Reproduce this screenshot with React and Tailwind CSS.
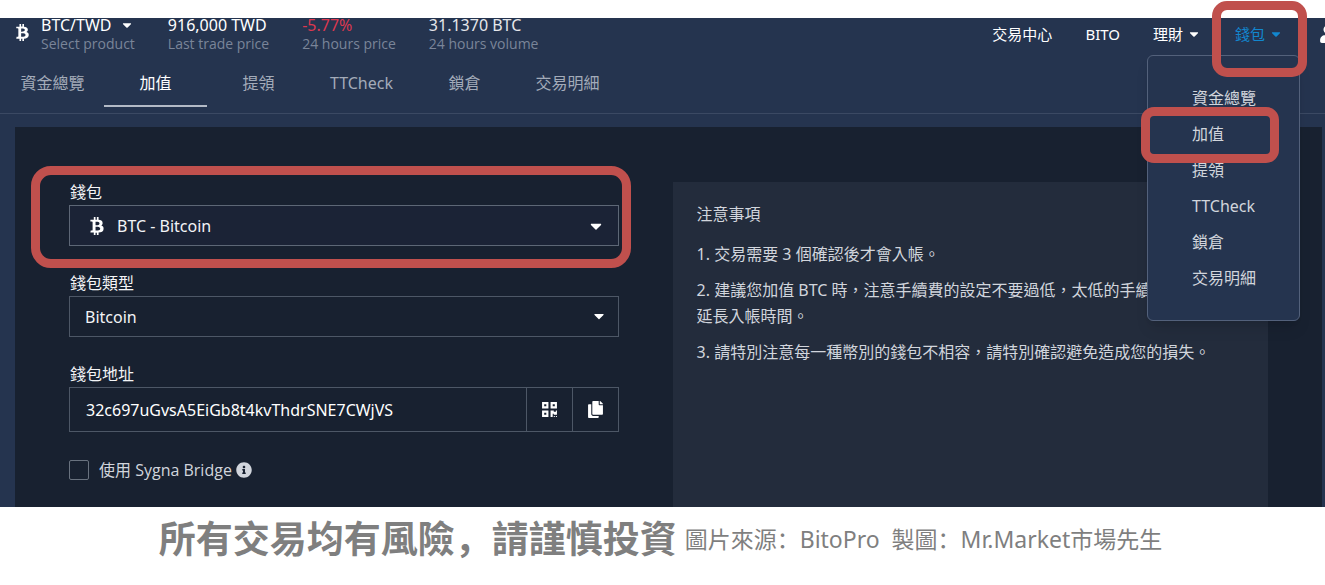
// src/App.jsx
import { useState } from 'react';
import { FaBtc, FaCaretDown, FaCopy, FaInfoCircle, FaQrcode, FaUser } from 'react-icons/fa';

const WALLET_PAGES = ['資金總覽', '加值', '提領', 'TTCheck', '鎖倉', '交易明細'];

const NOTES = [
  '1. 交易需要 3 個確認後才會入帳。',
  '2. 建議您加值 BTC 時，注意手續費的設定不要過低，太低的手續費可能會延長入帳時間。',
  '3. 請特別注意每一種幣別的錢包不相容，請特別確認避免造成您的損失。',
];

// Red marker frame, drawn over whatever it points at
function Marker({ className }) {
  return (
    <span className={`absolute z-20 border-[9px] border-[#c0504d] pointer-events-none ${className}`} />
  );
}

function Stat({ value, label, color = 'text-gray-200' }) {
  return (
    <div>
      <div className={`text-base leading-[18px] ${color}`}>{value}</div>
      <div className="text-sm leading-5 text-[#7a8599] font-['Open_Sans',sans-serif]">{label}</div>
    </div>
  );
}

function TopBar() {
  return (
    <header className="flex h-[42px] justify-between pl-[14px]">
      <div className="-mt-0.5 flex gap-[33px]">
        <div className="flex">
          <FaBtc className="mt-2 mr-[10px] w-[17px] h-[17px] text-white" />
          <Stat
            value={
              <button className="flex items-center gap-2 text-white">
                BTC/TWD <FaCaretDown className="w-3.5 h-3.5" />
              </button>
            }
            label="Select product"
          />
        </div>
        <Stat value="916,000 TWD" label="Last trade price" color="text-white" />
        <Stat value="-5.77%" label="24 hours price" color="text-[#dc3850]" />
        <Stat value="31.1370 BTC" label="24 hours volume" />
      </div>

      <nav className="-mr-3 flex h-8 shrink-0 items-center text-[15px] text-white">
        <a href="#trade" className="mr-[33px]">交易中心</a>
        <a href="#bito" className="mr-[33px]">BITO</a>
        <button className="mr-[34px] flex items-center gap-1">
          理財 <FaCaretDown className="w-3.5 h-3.5" />
        </button>
        <div className="relative mr-9">
          <button className="flex items-center gap-1 text-[#1287cf]">
            錢包 <FaCaretDown className="w-3.5 h-3.5" />
          </button>
          <Marker className="-left-[23px] -right-6 -top-[22px] h-[76px] rounded-[15px]" />
          <div className="absolute -right-[17px] top-8 z-10 w-[153px] rounded-md border border-[#53617b] bg-[#25344f] py-6 pl-11 shadow-lg">
            {WALLET_PAGES.map(page => (
              <a key={page} href="#wallet" className="block text-base leading-9 text-gray-300">
                {page}
              </a>
            ))}
            <Marker className="-left-[7px] top-[51px] h-14 w-[138px] rounded-[13px]" />
          </div>
        </div>
        <FaUser className="w-[18px] h-[18px]" />
      </nav>
    </header>
  );
}

function Tabs() {
  const [active, setActive] = useState('加值');

  return (
    <nav className="flex border-b border-[#3b4963] pb-1.5 pl-px">
      {WALLET_PAGES.map(page => (
        <button
          key={page}
          onClick={() => setActive(page)}
          className={`h-[47px] w-[103px] border-b-2 pt-px text-base ${active === page ? 'border-[#b3bac6] text-white' : 'border-transparent text-[#a3abb9]'}`}
        >
          {page}
        </button>
      ))}
    </nav>
  );
}

function DepositForm() {
  return (
    <form className="pt-[52px] pb-[27px] text-base text-gray-100">
      <div className="relative">
        <label htmlFor="wallet" className="block pl-px leading-[26px]">錢包</label>
        <div className="relative">
          <FaBtc className="absolute left-[19px] top-3 w-[18px] h-[18px] text-white" />
          <select
            id="wallet"
            className="block h-[41px] w-full appearance-none border border-[#5d6776] bg-[#1b2336] pl-[47px]"
          >
            <option>BTC - Bitcoin</option>
          </select>
          <FaCaretDown className="absolute right-3.5 top-3 w-[18px] h-[18px] text-white pointer-events-none" />
        </div>
        <Marker className="-left-[38px] -right-3 -top-[13px] h-[102px] rounded-[20px]" />
      </div>

      <div className="mt-6">
        <label htmlFor="type" className="block pl-px leading-[26px]">錢包類型</label>
        <div className="relative">
          <select
            id="type"
            className="block h-[41px] w-full appearance-none border border-[#4d5766] bg-transparent pl-[15px]"
          >
            <option>Bitcoin</option>
          </select>
          <FaCaretDown className="absolute right-3 top-3 w-4 h-4 text-white pointer-events-none" />
        </div>
      </div>

      <div className="mt-6">
        <label htmlFor="address" className="block pl-px leading-[26px]">錢包地址</label>
        <div className="flex h-[45px] divide-x divide-[#4d5766] border border-[#4d5766]">
          <input
            id="address"
            readOnly
            value="32c697uGvsA5EiGb8t4kvThdrSNE7CWjVS"
            className="min-w-0 flex-1 px-4 text-white"
          />
          <button type="button" aria-label="QR code" className="flex w-[46px] items-center justify-center text-white">
            <FaQrcode className="w-[17px] h-[17px]" />
          </button>
          <button type="button" aria-label="Copy" className="flex w-[45px] items-center justify-center text-white">
            <FaCopy className="w-[17px] h-[17px]" />
          </button>
        </div>
      </div>

      <div className="mt-7 flex h-5 items-center text-gray-300">
        <input
          id="sygna"
          type="checkbox"
          className="mr-[10px] h-5 w-5 appearance-none rounded-xs border border-[#69727f]"
        />
        <label htmlFor="sygna" className="font-['Open_Sans','Noto_Sans_CJK_TC',sans-serif]">使用 Sygna Bridge</label>
        <FaInfoCircle className="ml-1 w-4 h-4" />
      </div>
    </form>
  );
}

export default function App() {
  return (
    <div lang="zh-Hant" className="overflow-hidden bg-white pt-[18px] font-['Noto_Sans','Noto_Sans_CJK_TC',sans-serif]">
      <div className="bg-[#25344f]">
        <TopBar />
        <Tabs />
        <div className="pt-[13px] pr-[3px] pl-[15px]">
          <main className="grid grid-cols-[12fr_13fr] gap-[54px] bg-[#182130] px-[54px]">
            <DepositForm />
            <section className="mt-[55px] bg-[#232c3c] pt-[19px] pr-12 pl-6 text-base leading-[26px] text-gray-300">
              <h2 className="mb-3.5">注意事項</h2>
              {NOTES.map(note => (
                <p key={note} className="mb-2.5">{note}</p>
              ))}
            </section>
          </main>
        </div>
      </div>

      <footer className="flex items-center justify-center gap-2 pt-1.5 pr-1 text-[#7f7f7f] font-['Noto_Sans','Noto_Sans_CJK_SC',sans-serif]" lang="zh-Hans">
        <strong className="text-[37px] leading-[52px] font-bold">所有交易均有風險，請謹慎投資</strong>
        <span className="text-[23px] whitespace-pre">圖片來源：BitoPro  製圖：Mr.Market市場先生</span>
      </footer>
    </div>
  );
}
